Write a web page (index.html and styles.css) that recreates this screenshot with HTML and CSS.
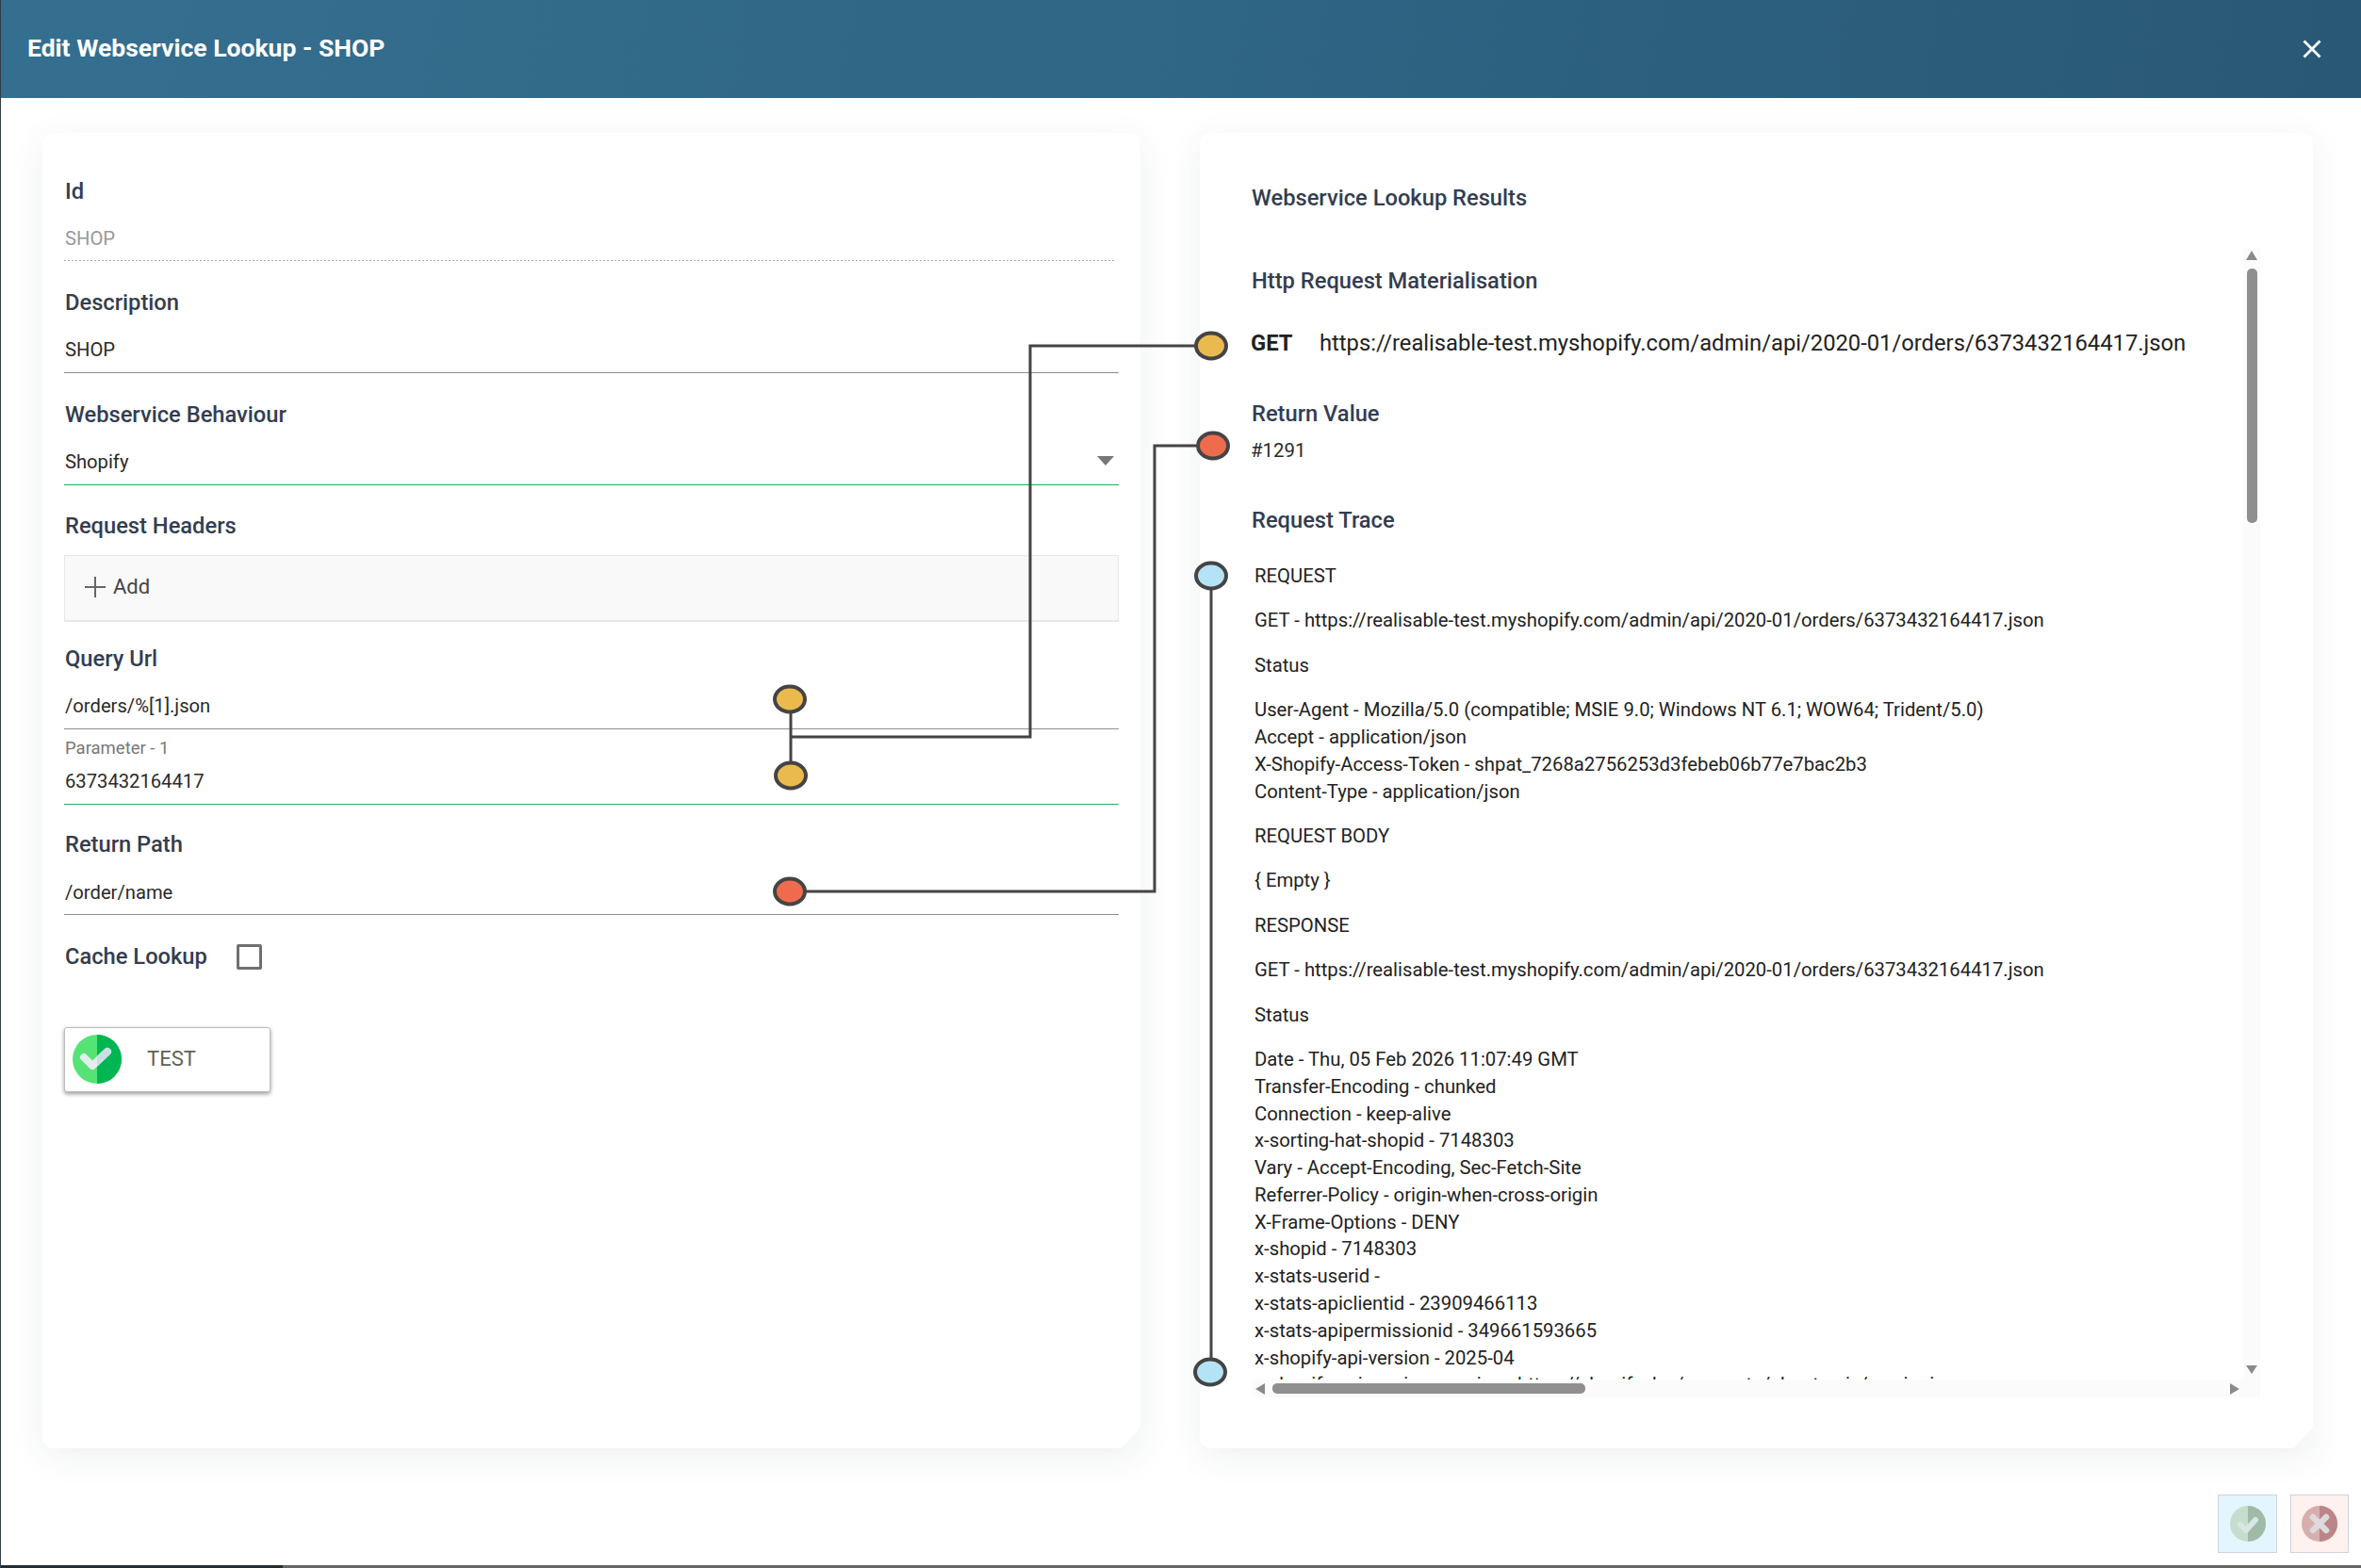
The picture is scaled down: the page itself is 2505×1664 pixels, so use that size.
FILE: index.html
```html
<!DOCTYPE html>
<html lang="en">

<head>
    <meta charset="UTF-8">
    <meta name="viewport" content="width=device-width, initial-scale=1.0">
    <title>Edit Webservice Lookup - SHOP</title>
    <link rel="stylesheet" href="styles.css">
</head>

<body>
    <div class="dialog">
        <div class="dialog-header">
            <span class="dialog-title">Edit Webservice Lookup - SHOP</span>
            <svg class="close-icon" viewBox="0 0 20 20" width="20" height="20">
                <path d="M1.5 1.5 L18.5 18.5 M18.5 1.5 L1.5 18.5" stroke="#fff" stroke-width="2.8" fill="none" />
            </svg>
        </div>

        <div class="dialog-body">
            <div class="card card-form">
                <div class="field">
                    <div class="field-label">Id</div>
                    <div class="field-value value-disabled">SHOP</div>
                </div>
                <div class="field">
                    <div class="field-label">Description</div>
                    <div class="field-value value-tall">SHOP</div>
                </div>
                <div class="field field-behaviour">
                    <div class="field-label">Webservice Behaviour</div>
                    <div class="field-value value-select">
                        Shopify
                        <span class="select-arrow"></span>
                    </div>
                </div>
                <div class="field field-headers">
                    <div class="field-label">Request Headers</div>
                    <div class="add-box">
                        <svg viewBox="0 0 22 22" width="22" height="22">
                            <path d="M11 0 V22 M0 11 H22" stroke="#666" stroke-width="2" fill="none" />
                        </svg>
                        <span>Add</span>
                    </div>
                </div>
                <div class="field field-query">
                    <div class="field-label">Query Url</div>
                    <div class="field-value value-tall">/orders/%[1].json</div>
                    <div class="param">
                        <div class="param-label">Parameter - 1</div>
                        <div class="field-value value-focus">6373432164417</div>
                    </div>
                </div>
                <div class="field">
                    <div class="field-label">Return Path</div>
                    <div class="field-value value-tall value-return">/order/name</div>
                </div>
                <div class="cache-row">
                    <span class="field-label">Cache Lookup</span>
                    <span class="checkbox"></span>
                </div>
                <div class="test-btn">
                    <svg viewBox="0 0 52 52" width="52" height="52">
                        <defs>
                            <clipPath id="rightHalf">
                                <rect x="26" y="0" width="26" height="52" />
                            </clipPath>
                        </defs>
                        <circle cx="26" cy="26" r="26" fill="#55e376" />
                        <path d="M26 0 A26 26 0 0 1 26 52 Z" fill="#00b652" />
                        <path d="M12 24 L21 33 L37 18" stroke="#e4eeee" stroke-width="8" stroke-linecap="round" stroke-linejoin="round" fill="none" />
                        <path d="M12 24 L21 33 L37 18" stroke="#c9dfe5" stroke-width="8" stroke-linecap="round" stroke-linejoin="round" fill="none" clip-path="url(#rightHalf)" />
                    </svg>
                    <span>TEST</span>
                </div>
            </div>

            <div class="card card-results">
                <div class="results-title">Webservice Lookup Results</div>
                <div class="results-scroll">
                    <div class="results-inner">
                        <div class="section-title title-http">Http Request Materialisation</div>
                        <div class="request-line"><b>GET</b><span>https://realisable-test.myshopify.com/admin/api/2020-01/orders/6373432164417.json</span></div>
                        <div class="section-title title-return">Return Value</div>
                        <div class="return-value">#1291</div>
                        <div class="section-title title-trace">Request Trace</div>
                        <div class="trace">
                            <p>REQUEST</p>
                            <p>GET - https://realisable-test.myshopify.com/admin/api/2020-01/orders/6373432164417.json</p>
                            <p>Status</p>
                            <p>User-Agent - Mozilla/5.0 (compatible; MSIE 9.0; Windows NT 6.1; WOW64; Trident/5.0)<br>
                                Accept - application/json<br>
                                X-Shopify-Access-Token - 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<br>
                                Content-Type - application/json</p>
                            <p>REQUEST BODY</p>
                            <p>{ Empty }</p>
                            <p>RESPONSE</p>
                            <p>GET - https://realisable-test.myshopify.com/admin/api/2020-01/orders/6373432164417.json</p>
                            <p>Status</p>
                            <p>Date - Thu, 05 Feb 2026 11:07:49 GMT<br>
                                Transfer-Encoding - chunked<br>
                                Connection - keep-alive<br>
                                x-sorting-hat-shopid - 7148303<br>
                                Vary - Accept-Encoding, Sec-Fetch-Site<br>
                                Referrer-Policy - origin-when-cross-origin<br>
                                X-Frame-Options - DENY<br>
                                x-shopid - 7148303<br>
                                x-stats-userid -<br>
                                x-stats-apiclientid - 23909466113<br>
                                x-stats-apipermissionid - 349661593665<br>
                                x-shopify-api-version - 2025-04<br>
                                x-shopify-api-version-warning - https://shopify.dev/concepts/about-apis/versioning</p>
                        </div>
                    </div>
                    <div class="scroll-v">
                        <span class="arrow arrow-up"></span>
                        <span class="thumb-v"></span>
                        <span class="arrow arrow-down"></span>
                    </div>
                    <div class="scroll-h">
                        <span class="arrow arrow-left"></span>
                        <span class="thumb-h"></span>
                        <span class="arrow arrow-right"></span>
                    </div>
                </div>
            </div>
        </div>

        <div class="dialog-footer">
            <div class="footer-btn btn-ok">
                <svg viewBox="0 0 38 38" width="38" height="38">
                    <circle cx="19" cy="19" r="19" fill="#c5dccf" />
                    <path d="M19 0 A19 19 0 0 1 19 38 Z" fill="#9fbba8" />
                    <path d="M11 20 L17 26 L27 15" stroke="#d9e6e2" stroke-width="6" stroke-linecap="round" stroke-linejoin="round" fill="none" />
                </svg>
            </div>
            <div class="footer-btn btn-cancel">
                <svg viewBox="0 0 38 38" width="38" height="38">
                    <circle cx="19" cy="19" r="19" fill="#d7aeae" />
                    <path d="M19 0 A19 19 0 0 1 19 38 Z" fill="#bb8589" />
                    <path d="M12 12 L26 26 M26 12 L12 26" stroke="#dcdadd" stroke-width="6.5" stroke-linecap="round" fill="none" />
                </svg>
            </div>
        </div>

        <div class="bottom-edge"></div>

        <!-- 필드와 결과 사이를 잇는 연결선 -->
        <svg class="connectors" width="2505" height="1664" viewBox="0 0 2505 1664">
            <path class="wire" d="M839 742 V823 M839 782 H1093 V367 H1285" />
            <path class="wire" d="M838 946 H1225 V473 H1287" />
            <path class="wire" d="M1285 611 V1456" />
            <ellipse class="node node-yellow" cx="838" cy="742" rx="16" ry="13.5" />
            <ellipse class="node node-yellow" cx="839" cy="823" rx="16" ry="13.5" />
            <ellipse class="node node-red" cx="838" cy="946" rx="16" ry="13.5" />
            <ellipse class="node node-yellow" cx="1285" cy="367" rx="16" ry="13.5" />
            <ellipse class="node node-red" cx="1287" cy="473" rx="16" ry="13.5" />
            <ellipse class="node node-blue" cx="1285" cy="611" rx="16" ry="13.5" />
            <ellipse class="node node-blue" cx="1284" cy="1456" rx="16" ry="13.5" />
        </svg>
    </div>
</body>

</html>
```

FILE: styles.css
```css
* {
    box-sizing: border-box;
}

html,
body {
    margin: 0;
    height: 100%;
}

body {
    font-family: Roboto, "Liberation Sans", sans-serif;
    background-color: #fff;
    overflow: hidden;
}

.dialog {
    position: relative;
    width: 2505px;
    height: 1664px;
    border-left: 1px solid #2f3d48;
    overflow: hidden;
}

.dialog-header {
    height: 104px;
    padding: 0 42px 0 28px;
    display: flex;
    align-items: center;
    justify-content: space-between;
    background: linear-gradient(100deg, #356f8f 0%, #2f6585 50%, #295875 100%);
}

.dialog-title {
    padding-bottom: 3px;
    font-size: 26.5px;
    font-weight: 700;
    color: #fff;
}

.dialog-body {
    display: flex;
    gap: 63px;
    padding: 37px 51px 0 44px;
}

.card {
    position: relative;
    height: 1396px;
    background-color: #fff;
    border-radius: 12px 12px 0 12px;
    box-shadow: 0 8px 36px rgba(40, 60, 80, 0.08);
}

/* 오른쪽 아래 잘린 모서리 */
.card::after {
    content: "";
    position: absolute;
    right: 0;
    bottom: 0;
    width: 21px;
    height: 22px;
    background-color: #f7f8f9;
    clip-path: polygon(100% 0, 100% 100%, 0 100%);
}

.card-form {
    width: 1165px;
    padding: 46px 23px 0 23px;
}

.card-results {
    width: 1181px;
    padding: 0 56px 0 54px;
}

.field {
    margin-bottom: 28px;
}

.field-label {
    padding-left: 1px;
    font-size: 23.7px;
    font-weight: 500;
    line-height: 32px;
    color: #333d50;
}

.field-value {
    position: relative;
    height: 58px;
    padding: 21px 0 0 1px;
    font-size: 20.2px;
    line-height: 26px;
    color: #2a2a2a;
    border-bottom: 1px solid #8e8e8e;
}

.value-tall {
    height: 59px;
}

.value-return {
    padding-top: 22px;
}

.value-disabled {
    margin-right: 3px;
    color: #999;
    border-bottom: 0;
    background-image: linear-gradient(90deg, #aaa 2px, transparent 2px);
    background-size: 4px 1px;
    background-position: left bottom;
    background-repeat: repeat-x;
}

.value-select {
    height: 59px;
    padding-top: 21px;
    border-bottom-color: #1fb25a;
}

.select-arrow {
    position: absolute;
    right: 5px;
    top: 28px;
    border-left: 9px solid transparent;
    border-right: 9px solid transparent;
    border-top: 10px solid #777;
}

.field-behaviour {
    margin-bottom: 27px;
}

.field-headers {
    margin-bottom: 23px;
}

.add-box {
    height: 71px;
    margin-top: 15px;
    padding: 0 0 3px 21px;
    display: flex;
    align-items: center;
    gap: 8px;
    font-size: 22px;
    color: #444;
    background-color: #f9f9f9;
    border: 1px solid #e8e8e8;
    border-bottom-width: 2px;
}

.field-query {
    margin-bottom: 26px;
}

.param {
    margin-top: 8px;
}

.param-label {
    padding-left: 1px;
    font-size: 18.5px;
    line-height: 24px;
    color: #777;
}

.param .field-value {
    height: 48px;
    padding-top: 10px;
}

.value-focus {
    border-bottom-color: #1fb25a;
}

.cache-row {
    margin-top: 1px;
    display: flex;
    align-items: center;
    gap: 31px;
}

.checkbox {
    width: 27px;
    height: 27px;
    border: 3px solid #6f6f6f;
    border-radius: 2px;
}

.test-btn {
    width: 219px;
    height: 69px;
    margin-top: 59px;
    padding: 0 0 2px 8px;
    display: flex;
    align-items: center;
    gap: 27px;
    font-size: 22px;
    color: #5f5f58;
    background-color: #fff;
    border: 1px solid #bbb;
    border-radius: 3px;
    box-shadow: 0 2px 4px rgba(0, 0, 0, 0.4);
}

.results-title {
    padding-top: 53px;
    padding-left: 1px;
    font-size: 23.7px;
    font-weight: 500;
    line-height: 32px;
    color: #333d50;
}

.results-scroll {
    position: relative;
    width: 1071px;
    height: 1219px;
    margin-top: 38px;
    overflow: hidden;
}

.results-inner {
    height: 1200px;
    overflow: hidden;
    white-space: nowrap;
}

.section-title {
    padding-left: 1px;
    font-size: 23.7px;
    font-weight: 500;
    line-height: 32px;
    color: #333d50;
}

.title-http {
    height: 50px;
    padding-top: 18px;
}

.title-return {
    margin-top: 43px;
}

.title-trace {
    margin-top: 44px;
}

.request-line {
    margin-top: 34px;
    font-size: 23.75px;
    line-height: 32px;
    color: #222;
}

.request-line b {
    display: inline-block;
    width: 73px;
    font-weight: 700;
}

.return-value {
    margin-top: 9px;
    font-size: 20.4px;
    line-height: 28px;
    color: #2a2a2a;
}

.trace {
    margin-top: 29px;
    padding-left: 4px;
    font-size: 20.3px;
    line-height: 28.8px;
    color: #222;
}

.trace p {
    margin: 0 0 18.6px;
}

.scroll-v {
    position: absolute;
    right: 0;
    top: 0;
    width: 18px;
    height: 1200px;
    background-color: #fbfbfb;
}

.scroll-h {
    position: absolute;
    left: 2px;
    right: 0;
    bottom: 0;
    height: 19px;
    background-color: #fbfbfb;
}

.thumb-v {
    position: absolute;
    left: 4px;
    top: 21px;
    width: 11px;
    height: 270px;
    background-color: #8f8f8f;
    border-radius: 5px;
}

.thumb-h {
    position: absolute;
    left: 21px;
    top: 4px;
    width: 332px;
    height: 11px;
    background-color: #8f8f8f;
    border-radius: 5px;
}

.arrow {
    position: absolute;
    width: 0;
    height: 0;
    border: 6px solid transparent;
}

.arrow-up {
    left: 3px;
    top: 2px;
    border-top-width: 0;
    border-bottom: 10px solid #8a8a8a;
}

.arrow-down {
    left: 3px;
    bottom: 6px;
    border-bottom-width: 0;
    border-top: 9px solid #8a8a8a;
}

.arrow-left {
    left: 3px;
    top: 4px;
    border-left-width: 0;
    border-right: 10px solid #8a8a8a;
}

.arrow-right {
    right: 22px;
    top: 4px;
    border-right-width: 0;
    border-left: 10px solid #8a8a8a;
}

.dialog-footer {
    position: absolute;
    right: 13px;
    bottom: 16px;
    display: flex;
    gap: 14px;
}

.footer-btn {
    height: 62px;
    display: flex;
    align-items: center;
    justify-content: center;
    border: 1px solid #cdd3dc;
}

.btn-ok {
    width: 63px;
    background-color: #e3f6ff;
}

.btn-cancel {
    width: 62px;
    background-color: #fff1f0;
}

.bottom-edge {
    position: absolute;
    left: -1px;
    right: 0;
    bottom: 0;
    height: 3px;
    background: linear-gradient(90deg, #252d33 0, #252d33 300px, #666 300px);
}

.connectors {
    position: absolute;
    left: -1px;
    top: 0;
    pointer-events: none;
}

.wire {
    fill: none;
    stroke: #444;
    stroke-width: 3;
}

.node {
    stroke: #444;
    stroke-width: 4;
}

.node-yellow {
    fill: #ebba4f;
}

.node-red {
    fill: #ee6c4d;
}

.node-blue {
    fill: #b3e3f4;
}
```
